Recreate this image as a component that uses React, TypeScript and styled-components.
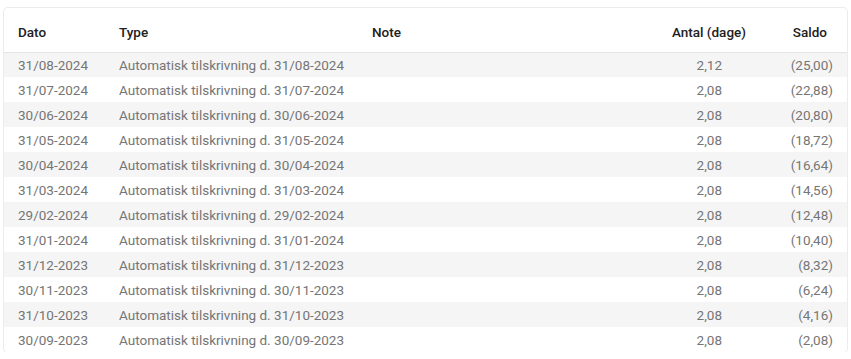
import React from "react";
import styled, { createGlobalStyle } from "styled-components";

const GlobalStyle = createGlobalStyle`
  html, body { margin: 0; padding: 0; background: #ffffff; }
  body { font-family: Roboto, "Noto Sans", Arial, sans-serif; }
`;

const Page = styled.div`
  padding: 8px 4px 0 4px;
  width: 843px;
`;

const Card = styled.div`
  background: #fff;
  border-radius: 4px;
  box-shadow: 0 0 0 1px #ececec, 0 1px 2px rgba(0, 0, 0, 0.06);
  overflow: hidden;
`;

const Table = styled.table`
  width: 100%;
  border-collapse: collapse;
  table-layout: fixed;
`;

const Col = styled.col<{ $w?: number }>`
  width: ${(p) => (p.$w ? `${p.$w}px` : "auto")};
`;

const HeadCell = styled.th<{ $align?: string; $pr?: number }>`
  height: 44px;
  box-sizing: border-box;
  padding: 4px ${(p) => p.$pr ?? 14}px 0 14px;
  text-align: ${(p) => p.$align ?? "left"};
  font-size: 13.5px;
  font-weight: 500;
  color: #212121;
  border-bottom: 1px solid #e4e4e4;
  white-space: nowrap;
`;

const Row = styled.tr<{ $striped: boolean }>`
  background: ${(p) => (p.$striped ? "#f5f5f5" : "#ffffff")};
`;

const Cell = styled.td<{ $align?: string; $pr?: number }>`
  height: 25px;
  padding: 1px ${(p) => p.$pr ?? 14}px 0 14px;
  box-sizing: border-box;
  text-align: ${(p) => p.$align ?? "left"};
  font-size: 13.5px;
  color: #757575;
  white-space: nowrap;
`;

const rows = [
  ["31/08-2024", "2,12", "(25,00)"],
  ["31/07-2024", "2,08", "(22,88)"],
  ["30/06-2024", "2,08", "(20,80)"],
  ["31/05-2024", "2,08", "(18,72)"],
  ["30/04-2024", "2,08", "(16,64)"],
  ["31/03-2024", "2,08", "(14,56)"],
  ["29/02-2024", "2,08", "(12,48)"],
  ["31/01-2024", "2,08", "(10,40)"],
  ["31/12-2023", "2,08", "(8,32)"],
  ["30/11-2023", "2,08", "(6,24)"],
  ["31/10-2023", "2,08", "(4,16)"],
  ["30/09-2023", "2,08", "(2,08)"],
];

export default function App() {
  return (
    <>
      <GlobalStyle />
      <Page>
        <Card>
          <Table>
            <colgroup>
              <Col $w={101} />
              <Col $w={253} />
              <Col />
              <Col $w={160} />
              <Col $w={86} />
            </colgroup>
            <thead>
              <tr>
                <HeadCell>Dato</HeadCell>
                <HeadCell>Type</HeadCell>
                <HeadCell>Note</HeadCell>
                <HeadCell $align="right" $pr={15}>Antal (dage)</HeadCell>
                <HeadCell $align="right" $pr={20}>Saldo</HeadCell>
              </tr>
            </thead>
            <tbody>
              {rows.map(([d, a, s], i) => (
                <Row key={d} $striped={i % 2 === 0}>
                  <Cell>{d}</Cell>
                  <Cell>Automatisk tilskrivning d. {d}</Cell>
                  <Cell />
                  <Cell $align="right" $pr={39}>{a}</Cell>
                  <Cell $align="right" $pr={14}>{s}</Cell>
                </Row>
              ))}
            </tbody>
          </Table>
        </Card>
      </Page>
    </>
  );
}
